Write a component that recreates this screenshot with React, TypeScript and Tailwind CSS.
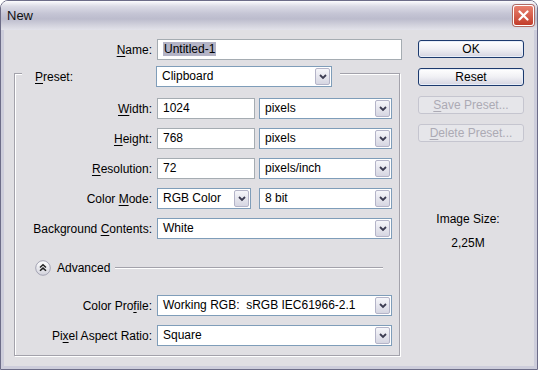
import React from 'react';

function Chevron() {
  return (
    <svg width="8" height="6" viewBox="0 0 8 6">
      <path d="M1 1 L4 4 L7 1" stroke="#3c3c52" strokeWidth="1.8" fill="none" />
    </svg>
  );
}

function Combo({ value, w }: { value: string; w: string }) {
  return (
    <div className={`flex h-[21px] shrink-0 border border-[#7f9db9] bg-white ${w}`}>
      <div className="flex-1 truncate whitespace-pre pl-[5px] leading-[19px]">{value}</div>
      <div className="m-px flex w-[15px] items-center justify-center rounded-[2px] border border-[#b4b4c8] bg-gradient-to-b from-[#f6f6fa] to-[#d6d6e2]">
        <Chevron />
      </div>
    </div>
  );
}

function Field({ children, w }: { children: React.ReactNode; w: string }) {
  return (
    <div className={`h-[21px] shrink-0 border border-[#a5acb2] bg-white pl-[5px] leading-[19px] ${w}`}>{children}</div>
  );
}

function U({ children }: { children: React.ReactNode }) {
  return <span className="underline underline-offset-2">{children}</span>;
}

function Row({ label, children }: { label: React.ReactNode; children: React.ReactNode }) {
  return (
    <div className="flex h-[21px] items-center">
      <div className="w-[142px] shrink-0 pr-[5px] text-right whitespace-nowrap">{label}</div>
      <div className="flex gap-[8px]">{children}</div>
    </div>
  );
}

function Button({ children, disabled }: { children: React.ReactNode; disabled?: boolean }) {
  return disabled ? (
    <div className="flex h-[18px] items-center justify-center rounded-[3px] border border-[#c5c5cf] bg-[#e6e6ea] text-[#acaab4]">
      {children}
    </div>
  ) : (
    <div className="flex h-[18px] items-center justify-center rounded-[3px] border border-[#1c3a6e] bg-gradient-to-b from-[#ffffff] via-[#f0f0f4] to-[#d4d4e0] shadow-[inset_0_0_0_1px_#e8eef8]">
      {children}
    </div>
  );
}

export default function App() {
  return (
    <div className="h-[370px] w-[538px] bg-white font-['Liberation_Sans',Arial,sans-serif] text-[12px] text-black">
      <div className="flex h-full flex-col overflow-hidden rounded-t-[8px] border border-[#6d6d88]">
        {/* title bar */}
        <div className="flex h-[29px] shrink-0 items-center justify-between bg-[linear-gradient(to_bottom,#fdfdfe_0%,#dcdce6_18%,#c4c4d4_45%,#bcbccd_62%,#d4d4de_85%,#e2e2ea_100%)] pl-[6px] pr-[3px]">
          <span className="text-[13px] text-[#111]">New</span>
          <div className="flex h-[21px] w-[21px] items-center justify-center rounded-[3px] border border-white bg-gradient-to-b from-[#e8806e] to-[#c23c2c] shadow-[0_0_0_1px_#b06a64]">
            <svg width="11" height="11" viewBox="0 0 11 11">
              <path d="M1.5 1.5 L9.5 9.5 M9.5 1.5 L1.5 9.5" stroke="#fff" strokeWidth="2.2" strokeLinecap="round" />
            </svg>
          </div>
        </div>

        {/* client */}
        <div className="flex flex-1 border-x-[3px] border-b-[3px] border-[#cdcddb] bg-[#e0dfe3]">
          <div className="w-[400px] shrink-0">
            <div className="mt-[9px] flex h-[21px] items-center">
              <div className="w-[153px] shrink-0 pr-[5px] text-right">
                <U>N</U>ame:
              </div>
              <Field w="w-[245px]">
                <span className="bg-[#b4b4c6] px-px">Untitled-1</span>
              </Field>
            </div>

            {/* group box */}
            <div className="ml-[10px] mt-[13px] w-[386px] border border-[#a3a2ab] pb-[9px] shadow-[inset_1px_1px_0_#fff,1px_1px_0_#fff]">
              <div className="-mt-[8px] ml-[7px] flex h-[21px] w-[318px] items-center bg-[#e0dfe3] pl-[13px] pr-[8px]">
                <span>
                  <U>P</U>reset:
                </span>
                <div className="ml-auto">
                  <Combo value="Clipboard" w="w-[176px]" />
                </div>
              </div>

              <div className="mt-[11px] flex flex-col gap-[9px]">
                <Row label={<><U>W</U>idth:</>}>
                  <Field w="w-[98px]">1024</Field>
                  <div className="-ml-[4px]">
                    <Combo value="pixels" w="w-[133px]" />
                  </div>
                </Row>
                <Row label={<><U>H</U>eight:</>}>
                  <Field w="w-[98px]">768</Field>
                  <div className="-ml-[4px]">
                    <Combo value="pixels" w="w-[133px]" />
                  </div>
                </Row>
                <Row label={<><U>R</U>esolution:</>}>
                  <Field w="w-[98px]">72</Field>
                  <div className="-ml-[4px]">
                    <Combo value="pixels/inch" w="w-[133px]" />
                  </div>
                </Row>
                <Row label={<>Color <U>M</U>ode:</>}>
                  <Combo value="RGB Color" w="w-[94px]" />
                  <Combo value="8 bit" w="w-[133px]" />
                </Row>
                <Row label={<>Background <U>C</U>ontents:</>}>
                  <Combo value="White" w="w-[235px]" />
                </Row>
              </div>

              <div className="mt-[21px] flex h-[15px] items-center pl-[20px] pr-[16px]">
                <svg width="16" height="16" viewBox="0 0 16 16" className="shrink-0">
                  <defs>
                    <linearGradient id="adv" x1="0" y1="0" x2="0" y2="1">
                      <stop offset="0" stopColor="#ffffff" />
                      <stop offset="1" stopColor="#d2d2dc" />
                    </linearGradient>
                  </defs>
                  <circle cx="8" cy="8" r="7.3" fill="url(#adv)" stroke="#a4a4b4" />
                  <path d="M5 7.5 L8 4.8 L11 7.5 M5 10.8 L8 8.1 L11 10.8" stroke="#222" strokeWidth="1.5" fill="none" />
                </svg>
                <span className="ml-[6px]">Advanced</span>
                <div className="ml-[5px] h-[2px] flex-1 border-t border-b border-t-[#a3a2ab] border-b-white" />
              </div>

              <div className="mt-[20px] flex flex-col gap-[9px]">
                <Row label={<>Color Pro<U>f</U>ile:</>}>
                  <Combo value="Working RGB:  sRGB IEC61966-2.1" w="w-[235px]" />
                </Row>
                <Row label={<>Pi<U>x</U>el Aspect Ratio:</>}>
                  <Combo value="Square" w="w-[235px]" />
                </Row>
              </div>
            </div>
          </div>

          {/* right column */}
          <div className="ml-[14px] w-[106px] shrink-0 pt-[10px]">
            <div className="flex flex-col gap-[10px]">
              <Button>OK</Button>
              <Button>Reset</Button>
              <Button disabled>
                <span>
                  <U>S</U>ave Preset...
                </span>
              </Button>
              <Button disabled>
                <span>
                  <U>D</U>elete Preset...
                </span>
              </Button>
            </div>
            <div className="mt-[70px] flex flex-col items-center gap-[10px] pr-[6px] leading-[14px]">
              <span>Image Size:</span>
              <span>2,25M</span>
            </div>
          </div>
        </div>
      </div>
    </div>
  );
}
